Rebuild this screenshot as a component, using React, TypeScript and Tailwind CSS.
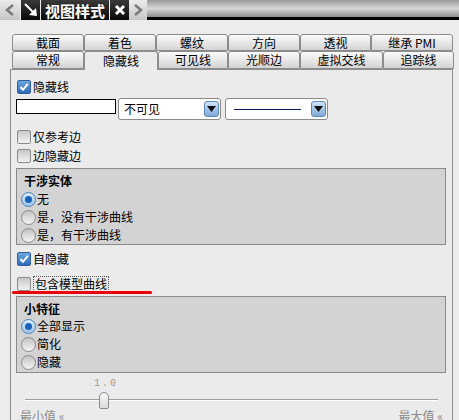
import React from 'react'

const font = { fontFamily: '"Noto Sans CJK SC", "Liberation Sans", sans-serif' }

const Check = ({ on, label, focus }: { on?: boolean; label: string; focus?: boolean }) => (
  <div className="flex items-center h-[16px] pl-[6px]">
    {on ? (
      <div className="w-[14px] h-[14px] rounded-[2px] border border-[#2f5f9a] bg-gradient-to-b from-[#6ea6dd] to-[#2a6ab8] flex items-center justify-center">
        <svg width="10" height="10" viewBox="0 0 10 10">
          <polyline points="1.5,5 4,7.8 8.8,1.8" fill="none" stroke="#fff" strokeWidth="2" />
        </svg>
      </div>
    ) : (
      <div className="w-[14px] h-[14px] rounded-[2px] border border-[#8a8a8a] bg-gradient-to-b from-[#c8c8c8] to-[#f2f2f2]" />
    )}
    <span className={`ml-[2px] text-[12px] leading-[14px] text-black ${focus ? 'border border-dotted border-[#555] px-[1px]' : ''}`}>
      {label}
    </span>
  </div>
)

const Radio = ({ on, label }: { on?: boolean; label: string }) => (
  <div className="flex items-center h-[18px] pl-[4px]">
    {on ? (
      <div className="w-[15px] h-[15px] rounded-full border border-[#4d7fb5] bg-gradient-to-b from-[#d8ecfb] to-[#9cc6ea] flex items-center justify-center">
        <div className="w-[7px] h-[7px] rounded-full bg-[#1c62b8]" />
      </div>
    ) : (
      <div className="w-[15px] h-[15px] rounded-full border border-[#8a8a8a] bg-gradient-to-b from-[#c4c4c4] to-[#f4f4f4]" />
    )}
    <span className="ml-[1px] text-[12px] leading-[14px] text-black">{label}</span>
  </div>
)

const Arrow = () => (
  <div className="w-[15px] h-[16px] rounded-[3px] border border-[#5b86b8] bg-gradient-to-b from-[#cfe3f7] to-[#7fa9d9] flex items-center justify-center">
    <svg width="9" height="6" viewBox="0 0 9 6">
      <polygon points="0,0 9,0 4.5,6" fill="#111" />
    </svg>
  </div>
)

const Tab = ({ w, label, sel }: { w: number; label: string; sel?: boolean }) => (
  <div
    style={{ width: w }}
    className={
      sel
        ? 'h-[19px] -mb-[1px] relative z-10 border border-b-0 border-[#8c8c8c] rounded-t-[3px] bg-[#ebebeb] flex items-center justify-center text-[12px] text-black'
        : 'h-full border border-[#8c8c8c] rounded-t-[3px] bg-gradient-to-b from-[#fbfbfb] to-[#d4d4d4] flex items-center justify-center text-[12px] text-black'
    }
  >
    {label}
  </div>
)

export default function App() {
  const row1 = [
    ['截面', 72],
    ['着色', 72],
    ['螺纹', 72],
    ['方向', 72],
    ['透视', 71],
    ['继承 PMI', 82],
  ] as const
  const row2 = [
    ['常规', 72],
    ['隐藏线', 74],
    ['可见线', 70],
    ['光顺边', 72],
    ['虚拟交线', 83],
    ['追踪线', 71],
  ] as const

  return (
    <div className="w-[459px] h-[420px] bg-[#ececec] overflow-hidden relative" style={font}>
      {/* title bar */}
      <div className="h-[20px] flex">
        <div className="w-[20px] h-full bg-gradient-to-b from-[#ececec] to-[#c6c6c6] flex items-center justify-center">
          <svg width="10" height="12" viewBox="0 0 10 12">
            <polyline points="8,1 2,6 8,11" fill="none" stroke="#7a7a7a" strokeWidth="2.5" />
          </svg>
        </div>
        <div className="w-[19px] ml-[1px] h-full bg-gradient-to-b from-[#3a3a3a] to-[#0a0a0a] flex items-center justify-center">
          <svg width="14" height="14" viewBox="0 0 14 14">
            <line x1="1" y1="1" x2="10" y2="10" stroke="#fff" strokeWidth="2" />
            <polygon points="13,13 5,12 12,5" fill="#fff" />
          </svg>
        </div>
        <div className="w-[68px] ml-[1px] h-full bg-gradient-to-b from-[#3a3a3a] to-[#0a0a0a] flex items-center justify-center text-white font-bold text-[15px] leading-none">
          视图样式
        </div>
        <div className="w-[19px] ml-[1px] h-full bg-gradient-to-b from-[#3a3a3a] to-[#0a0a0a] flex items-center justify-center">
          <svg width="12" height="12" viewBox="0 0 12 12">
            <path d="M2 2 L10 10 M10 2 L2 10" stroke="#fff" strokeWidth="3" />
          </svg>
        </div>
        <div className="w-[18px] h-full bg-gradient-to-b from-[#ececec] to-[#c6c6c6] flex items-center justify-center">
          <svg width="10" height="12" viewBox="0 0 10 12">
            <polyline points="2,1 8,6 2,11" fill="none" stroke="#7a7a7a" strokeWidth="2.5" />
          </svg>
        </div>
        <div className="flex-1 h-full flex flex-col">
          <div className="h-[17px] bg-gradient-to-b from-[#9a9a9a] via-[#d8d8d8] to-[#8e8e8e]" />
          <div className="h-[3px] bg-black" />
        </div>
      </div>

      {/* tabs */}
      <div className="mt-[14px] ml-[12px] w-[442px]">
        <div className="flex h-[17px]">
          {row1.map(([l, w]) => (
            <Tab key={l} w={w} label={l} />
          ))}
        </div>
        <div className="flex h-[18px] items-end">
          {row2.map(([l, w]) => (
            <Tab key={l} w={w} label={l} sel={l === '隐藏线'} />
          ))}
        </div>
      </div>

      {/* panel */}
      <div className="ml-[10px] w-[443px] h-[360px] border border-[#8c8c8c] bg-[#ebebeb] pt-[9px]">
        <Check on label="隐藏线" />
        <div className="flex items-start h-[22px] mt-[3px] pl-[5px]">
          <div className="w-[100px] h-[15px] mt-[1px] border border-black bg-white" />
          <div className="ml-[2px] w-[103px] h-[22px] rounded-[3px] border border-[#8a8a8a] bg-white flex items-center justify-between pl-[5px] pr-[1px]">
            <span className="text-[12px] text-black">不可见</span>
            <Arrow />
          </div>
          <div className="ml-[4px] w-[103px] h-[22px] rounded-[3px] border border-[#8a8a8a] bg-white flex items-center justify-between pl-[8px] pr-[1px]">
            <div className="w-[67px] h-[1px] bg-[#0c1a5a]" />
            <Arrow />
          </div>
        </div>
        <div className="mt-[9px]">
          <Check label="仅参考边" />
        </div>
        <div className="mt-[3px]">
          <Check label="边隐藏边" />
        </div>

        <div className="ml-[5px] mt-[4px] w-[430px] h-[77px] border border-[#8a8a8a] bg-[#d3d3d3] pt-[4px]">
          <div className="pl-[7px] text-[12px] font-bold leading-[16px] text-black">干涉实体</div>
          <div className="mt-[1px]">
            <Radio on label="无" />
            <Radio label="是，没有干涉曲线" />
            <Radio label="是，有干涉曲线" />
          </div>
        </div>

        <div className="mt-[6px]">
          <Check on label="自隐藏" />
        </div>
        <div className="mt-[9px]">
          <Check label="包含模型曲线" focus />
        </div>

        <div className="ml-[5px] mt-[4px] w-[430px] h-[77px] border border-[#8a8a8a] bg-[#d3d3d3] pt-[4px]">
          <div className="pl-[7px] text-[12px] font-bold leading-[16px] text-black">小特征</div>
          <div>
            <Radio on label="全部显示" />
            <Radio label="简化" />
            <Radio label="隐藏" />
          </div>
        </div>

        <div className="pl-[83px] mt-[5px] text-[10px] leading-[12px] text-[#9a9a9a] tracking-[2px]" style={{ fontFamily: '"Liberation Mono", monospace' }}>
          1.0
        </div>
        <div className="relative h-[20px] mx-[14px]">
          <div className="absolute left-0 right-0 top-[9px] h-[2px] bg-[#a0a0a0] border-b border-white" />
          <div className="absolute left-[74px] top-[2px] w-[10px] h-[17px] rounded-t-[5px] rounded-b-[2px] border border-[#8a8a8a] bg-gradient-to-b from-[#fafafa] to-[#dcdcdc]" />
        </div>
        <div className="flex justify-between -mt-[1px] px-[9px] text-[12px] leading-[14px] text-[#8a8a8a]">
          <span>最小值 «</span>
          <span>最大值 «</span>
        </div>
      </div>

      {/* red annotation underline */}
      <div className="absolute left-[12px] top-[291px] w-[140px] h-[3px] rounded-full bg-[#e8000a]" />
    </div>
  )
}
